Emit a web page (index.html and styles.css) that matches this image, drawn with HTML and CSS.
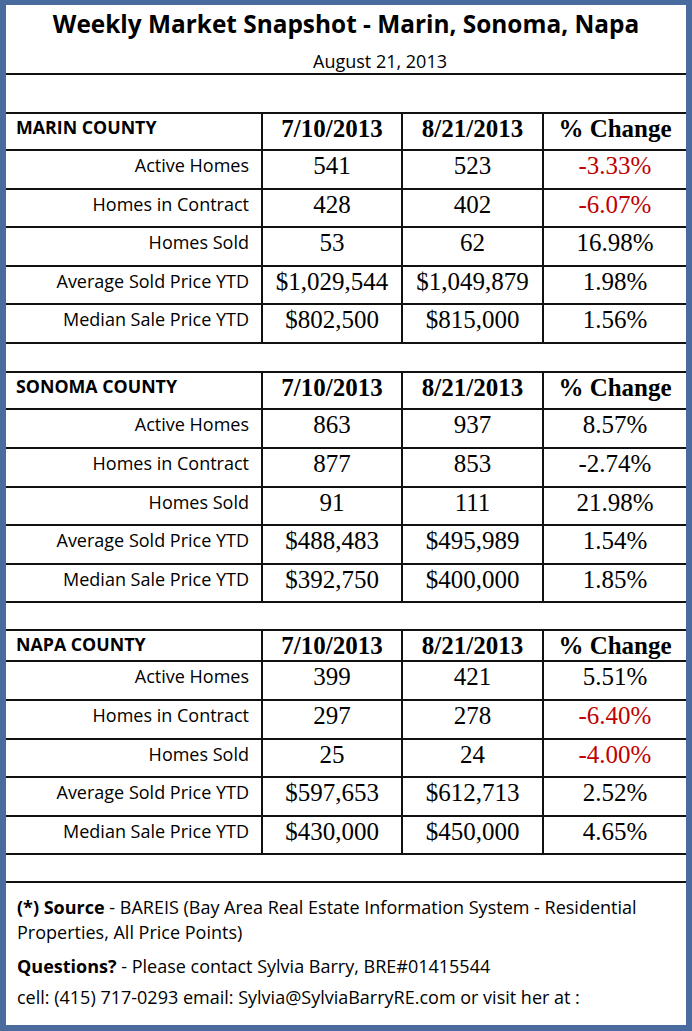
FILE: index.html
```html
<!DOCTYPE html>
<html>
<head>
<meta charset="utf-8">
<link rel="stylesheet" href="styles.css">
</head>
<body>
<div class="frame">
  <div class="head">
    <h1 class="title">Weekly Market Snapshot - Marin, Sonoma, Napa</h1>
    <div class="date">August 21, 2013</div>
  </div>
  <table class="grid">
    <colgroup><col class="c1"><col class="c2"><col class="c3"><col class="c4"></colgroup>
    <tr class="gap g1"><td colspan="4"></td></tr>
    <tr class="hdr"><td class="county">MARIN COUNTY</td><td class="hnum">7/10/2013</td><td class="hnum">8/21/2013</td><td class="hnum">% Change</td></tr>
    <tr class="row"><td class="lbl">Active Homes</td><td class="num">541</td><td class="num">523</td><td class="num neg">-3.33%</td></tr>
    <tr class="row"><td class="lbl">Homes in Contract</td><td class="num">428</td><td class="num">402</td><td class="num neg">-6.07%</td></tr>
    <tr class="row"><td class="lbl">Homes Sold</td><td class="num">53</td><td class="num">62</td><td class="num">16.98%</td></tr>
    <tr class="row"><td class="lbl">Average Sold Price YTD</td><td class="num">$1,029,544</td><td class="num">$1,049,879</td><td class="num">1.98%</td></tr>
    <tr class="row"><td class="lbl">Median Sale Price YTD</td><td class="num">$802,500</td><td class="num">$815,000</td><td class="num">1.56%</td></tr>
    <tr class="gap g2"><td colspan="4"></td></tr>
    <tr class="hdr"><td class="county">SONOMA COUNTY</td><td class="hnum">7/10/2013</td><td class="hnum">8/21/2013</td><td class="hnum">% Change</td></tr>
    <tr class="row"><td class="lbl">Active Homes</td><td class="num">863</td><td class="num">937</td><td class="num">8.57%</td></tr>
    <tr class="row"><td class="lbl">Homes in Contract</td><td class="num">877</td><td class="num">853</td><td class="num">-2.74%</td></tr>
    <tr class="row"><td class="lbl">Homes Sold</td><td class="num">91</td><td class="num">111</td><td class="num">21.98%</td></tr>
    <tr class="row"><td class="lbl">Average Sold Price YTD</td><td class="num">$488,483</td><td class="num">$495,989</td><td class="num">1.54%</td></tr>
    <tr class="row"><td class="lbl">Median Sale Price YTD</td><td class="num">$392,750</td><td class="num">$400,000</td><td class="num">1.85%</td></tr>
    <tr class="gap g3"><td colspan="4"></td></tr>
    <tr class="hdr short"><td class="county">NAPA COUNTY</td><td class="hnum">7/10/2013</td><td class="hnum">8/21/2013</td><td class="hnum">% Change</td></tr>
    <tr class="row"><td class="lbl">Active Homes</td><td class="num">399</td><td class="num">421</td><td class="num">5.51%</td></tr>
    <tr class="row"><td class="lbl">Homes in Contract</td><td class="num">297</td><td class="num">278</td><td class="num neg">-6.40%</td></tr>
    <tr class="row"><td class="lbl">Homes Sold</td><td class="num">25</td><td class="num">24</td><td class="num neg">-4.00%</td></tr>
    <tr class="row"><td class="lbl">Average Sold Price YTD</td><td class="num">$597,653</td><td class="num">$612,713</td><td class="num">2.52%</td></tr>
    <tr class="row"><td class="lbl">Median Sale Price YTD</td><td class="num">$430,000</td><td class="num">$450,000</td><td class="num">4.65%</td></tr>
    <tr class="gap g4"><td colspan="4"></td></tr>
  </table>
  <div class="foot">
    <p class="p1"><b>(*) Source</b> - BAREIS (Bay Area Real Estate Information System - Residential Properties, All Price Points)</p>
    <p class="p2"><b>Questions?</b> - Please contact Sylvia Barry, BRE#01415544</p>
    <p class="p3">cell: (415) 717-0293 email: Sylvia@SylviaBarryRE.com or visit her at :</p>
  </div>
</div>
</body>
</html>
```

FILE: styles.css
```css
html, body {
  margin: 0;
  padding: 0;
  background: #ffffff;
}
.frame {
  width: 692px;
  height: 1031px;
  box-sizing: border-box;
  border-style: solid;
  border-color: #4a6b9d;
  border-width: 5px 6px 6px 6px;
  background: #ffffff;
  display: flex;
  flex-direction: column;
  font-family: "Open Sans", "Liberation Sans", sans-serif;
  color: #000;
  overflow: hidden;
}
.head {
  height: 68px;
  flex: none;
  display: flex;
  flex-direction: column;
  align-items: center;
}
.title {
  margin: 5px 0 0 0;
  font-size: 24.4px;
  line-height: 28px;
  font-weight: 700;
}
.date {
  align-self: flex-start;
  margin: 12px 0 0 307px;
  font-size: 18px;
  line-height: 22px;
}
.grid {
  width: 680px;
  flex: none;
  border-collapse: collapse;
  table-layout: fixed;
}
.c1 { width: 256px; }
.c2 { width: 140px; }
.c3 { width: 141px; }
.c4 { width: 143px; }
.grid td {
  box-sizing: border-box;
  border: 2px solid #111;
  padding: 0;
  vertical-align: top;
}
.grid td:first-child { border-left: none; }
.grid td:last-child { border-right: none; }
.g1 td { height: 38.5px; }
.g2 td { height: 29px; }
.g3 td { height: 28px; }
.g4 td { height: 28px; }
.hdr td { height: 37.5px; }
.hdr.short td { height: 29.5px; }
.row td { height: 38.6px; }
.county {
  font-weight: 700;
  font-size: 17.8px;
  line-height: 22px;
  padding: 2px 0 0 10px !important;
}
.hnum {
  font-family: "Liberation Serif", "Times New Roman", serif;
  font-weight: 700;
  font-size: 25px;
  line-height: 28px;
  text-align: center;
  padding-top: 1px !important;
}
.lbl {
  text-align: right;
  font-size: 18px;
  line-height: 22px;
  padding: 3px 12px 0 0 !important;
}
.num {
  font-family: "Liberation Serif", "Times New Roman", serif;
  font-size: 25px;
  line-height: 28px;
  text-align: center;
  padding-top: 1px !important;
}
.neg { color: #c00000; }
.foot {
  padding: 12px 12px 0 11px;
  font-size: 18px;
  line-height: 25px;
}
.foot p { margin: 0; }
.foot b { font-weight: 700; }
.p2 { margin-top: 9px !important; }
.p3 { margin-top: 6px !important; }
```
